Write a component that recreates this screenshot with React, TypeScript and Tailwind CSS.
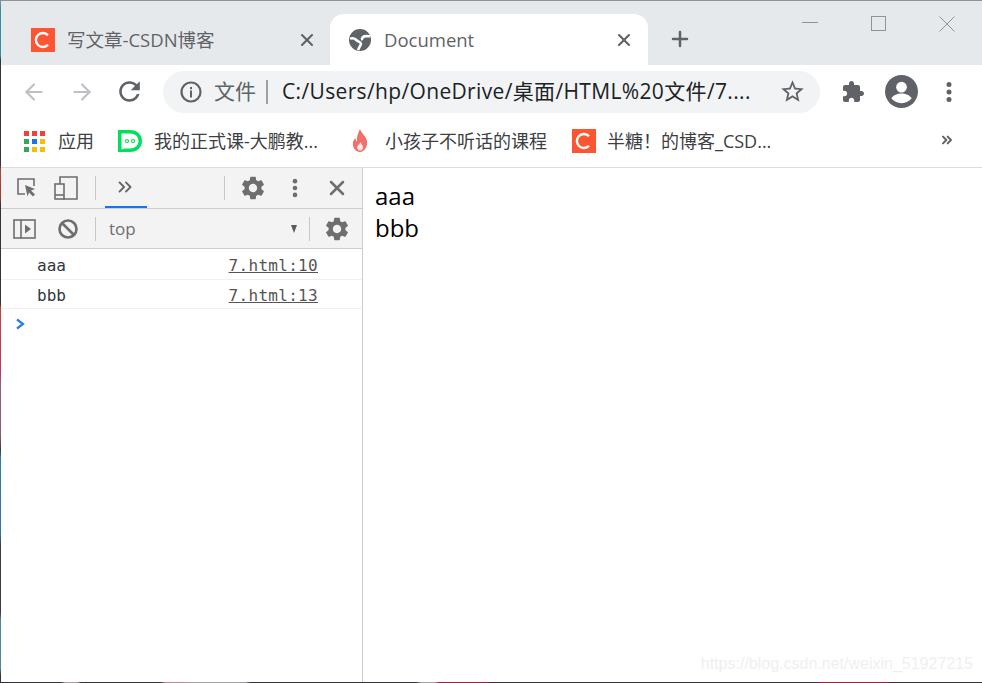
import React from 'react';
import { Plus, X, ArrowLeft, ArrowRight, ChevronsRight } from 'lucide-react';

const uiFont = "font-['Open_Sans','Noto_Sans_CJK_SC',sans-serif]";

const GEAR_PATH = 'M19.14 12.94c.04-.3.06-.61.06-.94 0-.32-.02-.64-.07-.94l2.03-1.58c.18-.14.23-.41.12-.61l-1.92-3.32c-.12-.22-.37-.29-.59-.22l-2.39.96c-.5-.38-1.03-.7-1.62-.94l-.36-2.54c-.04-.24-.24-.41-.48-.41h-3.84c-.24 0-.43.17-.47.41l-.36 2.54c-.59.24-1.13.57-1.62.94l-2.39-.96c-.22-.08-.47 0-.59.22L2.74 8.87c-.12.21-.08.47.12.61l2.03 1.58c-.05.3-.09.63-.09.94s.02.64.07.94l-2.03 1.58c-.18.14-.23.41-.12.61l1.92 3.32c.12.22.37.29.59.22l2.39-.96c.5.38 1.03.7 1.62.94l.36 2.54c.05.24.24.41.48.41h3.84c.24 0 .44-.17.47-.41l.36-2.54c.59-.24 1.13-.56 1.62-.94l2.39.96c.22.08.47 0 .59-.22l1.92-3.32c.12-.22.07-.47-.12-.61l-2.01-1.58zM12 15.6c-1.98 0-3.6-1.62-3.6-3.6s1.62-3.6 3.6-3.6 3.6 1.62 3.6 3.6-1.62 3.6-3.6 3.6z';

const CsdnIcon = () => (
  <div className="w-6 h-6 bg-[#fc5531] flex items-center justify-center shrink-0">
    <svg width="18" height="18" viewBox="0 0 18 18" fill="none">
      <path d="M14 4.2A7 7 0 1 0 14 13.8" stroke="#fff" strokeWidth="2.4" />
    </svg>
  </div>
);

const GlobeIcon = () => (
  <svg width="22" height="22" viewBox="0 0 24 24" fill="none" className="shrink-0">
    <circle cx="12" cy="12" r="12" fill="#5f6368" />
    <path d="M1 10.500c3-1 5-.5 7 1.500s5 2 5 4-2 3-3 7" stroke="#fff" strokeWidth="2.800" />
    <path d="M23 8c-3 0-6-1-8 1-1 1-1 2 0 3" stroke="#fff" strokeWidth="2.800" />
  </svg>
);

const AppsIcon = () => {
  const colors = ['#ef4136', '#ef4136', '#ef4136', '#34a853', '#1a73e8', '#fbbc04', '#34a853', '#fbbc04', '#fbbc04'];
  return (
    <div className="grid grid-cols-3 gap-[3px] w-[21px] shrink-0">
      {colors.map((c, i) => (
        <div key={i} className="w-[5px] h-[5px]" style={{ background: c }} />
      ))}
    </div>
  );
};

const ChatIcon = () => (
  <svg width="24" height="24" viewBox="0 0 24 24" className="shrink-0">
    <path d="M0 1h12c7 0 12 4.500 12 11s-5 11-12 11H0z" fill="#00e05c" />
    <path d="M3.500 4.500h8.500c5 0 8.500 3 8.500 7.500s-3.500 7.500-8.500 7.500H6.500l-3 1z" fill="#fff" />
    <circle cx="9" cy="12" r="1.500" fill="none" stroke="#00e05c" strokeWidth="1.200" />
    <circle cx="15" cy="12" r="1.500" fill="none" stroke="#00e05c" strokeWidth="1.200" />
  </svg>
);

const FlameIcon = () => (
  <svg width="16" height="24" viewBox="0 0 16 24" className="shrink-0">
    <path d="M8 0c1 4 6 7 7 12 1 6-3 11-7 11S0 19 1 13c.5-2 1.500-3 2.500-4 0 2 .5 3 1.500 3.500C4.500 8 6 4 8 0z" fill="#f0706a" />
    <path d="M8.500 13c.5 2 2.500 3 2.500 5.500 0 1.500-1 3-3 3s-3-1.500-3-3c0-2 2.500-3 3.500-5.500z" fill="#fde8e6" />
  </svg>
);

const AvatarIcon = () => (
  <svg width="33" height="33" viewBox="0 0 34 34" className="shrink-0">
    <circle cx="17" cy="17" r="17" fill="#5f6368" />
    <circle cx="17" cy="12.500" r="5.500" fill="#fff" />
    <path d="M6.500 24c2-3.500 6.500-5 10.500-5s8.500 1.500 10.500 5c-2.500 3-6 5-10.500 5s-8-2-10.500-5z" fill="#fff" />
  </svg>
);

const ExtensionIcon = () => (
  <svg width="24" height="24" viewBox="0 0 24 24" fill="#5f6368" className="shrink-0">
    <path d="M20.5 11H19V7c0-1.100-.9-2-2-2h-4V3.500C13 2.120 11.880 1 10.500 1S8 2.120 8 3.500V5H4c-1.100 0-1.990.9-1.990 2v3.800H3.500c1.490 0 2.700 1.210 2.700 2.700s-1.210 2.700-2.700 2.700H2V20c0 1.100.9 2 2 2h3.800v-1.500c0-1.490 1.210-2.700 2.700-2.700 1.490 0 2.700 1.210 2.700 2.700V22H17c1.100 0 2-.9 2-2v-4h1.500c1.380 0 2.500-1.120 2.500-2.500S21.880 11 20.500 11z" />
  </svg>
);

const ReloadIcon = () => (
  <svg width="31" height="31" viewBox="0 0 24 24" fill="#5f6368" className="shrink-0">
    <path d="M17.650 6.350C16.200 4.900 14.210 4 12 4c-4.420 0-7.990 3.580-7.990 8s3.570 8 7.990 8c3.730 0 6.840-2.550 7.730-6h-2.080c-.82 2.330-3.040 4-5.650 4-3.310 0-6-2.690-6-6s2.690-6 6-6c1.660 0 3.140.69 4.220 1.780L13 11h7V4l-2.350 2.350z" />
  </svg>
);

const InfoIcon = () => (
  <svg width="22" height="22" viewBox="0 0 22 22" fill="none" className="shrink-0">
    <circle cx="11" cy="11" r="9.500" stroke="#5f6368" strokeWidth="2.200" />
    <rect x="10" y="9.500" width="2" height="7" fill="#5f6368" />
    <rect x="10" y="6" width="2" height="2.200" fill="#5f6368" />
  </svg>
);

const StarIcon = () => (
  <svg width="27" height="27" viewBox="0 0 24 24" fill="#5f6368" className="shrink-0">
    <path d="M22 9.240l-7.190-.62L12 2 9.190 8.630 2 9.240l5.460 4.730L5.820 21 12 17.270 18.180 21l-1.630-7.030L22 9.240zM12 15.400l-3.760 2.270 1-4.280-3.320-2.880 4.380-.38L12 6.100l1.710 4.040 4.380.38-3.320 2.880 1 4.280L12 15.400z" />
  </svg>
);

const DotsIcon = ({ color, size }: { color: string; size: number }) => (
  <svg width={size} height={size} viewBox="0 0 24 24" fill={color} className="shrink-0">
    <circle cx="12" cy="4.500" r="2.500" />
    <circle cx="12" cy="12" r="2.500" />
    <circle cx="12" cy="19.500" r="2.500" />
  </svg>
);

const InspectIcon = () => (
  <svg width="22" height="22" viewBox="0 0 22 22" fill="none" className="shrink-0">
    <path d="M9 17H2V2h16v7" stroke="#6e6e6e" strokeWidth="1.600" />
    <path d="M9 8l10 4-4 1.500 4 4-2 2-4-4-1.500 4z" fill="#6e6e6e" />
  </svg>
);

const DeviceIcon = () => (
  <svg width="24" height="24" viewBox="0 0 24 24" fill="none" className="shrink-0">
    <path d="M6 8V1h17v22H9" stroke="#6e6e6e" strokeWidth="1.600" />
    <rect x="1" y="8" width="9" height="15" stroke="#6e6e6e" strokeWidth="1.600" />
    <path d="M1 19h9" stroke="#6e6e6e" strokeWidth="1.600" />
  </svg>
);

const SidebarIcon = () => (
  <svg width="24" height="22" viewBox="0 0 24 22" fill="none" className="shrink-0">
    <rect x="1" y="2" width="21" height="18" stroke="#6e6e6e" strokeWidth="1.600" />
    <path d="M8 2v18" stroke="#6e6e6e" strokeWidth="1.600" />
    <path d="M12 6.500l6 4.500-6 4.500z" fill="#6e6e6e" />
  </svg>
);

const BlockIcon = () => (
  <svg width="22" height="22" viewBox="0 0 22 22" fill="none" className="shrink-0">
    <circle cx="11" cy="11" r="8.500" stroke="#6e6e6e" strokeWidth="2.600" />
    <path d="M5 5l12 12" stroke="#6e6e6e" strokeWidth="2.600" />
  </svg>
);

const Gear = () => (
  <svg width="28" height="28" viewBox="0 0 24 24" fill="#6e6e6e" className="shrink-0">
    <path d={GEAR_PATH} />
  </svg>
);

const ToolbarDivider = () => <div className="w-px h-6 bg-[#c8c8c8] shrink-0" />;

const Bookmark = ({ icon, label, className }: { icon: React.ReactNode; label: string; className: string }) => (
  <div className={`flex items-center ${className}`}>
    {icon}
    <span className="text-[18px] text-[#3c4043] whitespace-nowrap leading-none">{label}</span>
  </div>
);

const ConsoleRow = ({ msg, source, className }: { msg: string; source: string; className: string }) => (
  <div className={`flex justify-between pl-[36px] pr-[44px] pt-[4px] items-center border-b border-[#f0f0f0] font-['DejaVu_Sans_Mono',monospace] text-[16px] text-[#303942] ${className}`}>
    <span>{msg}</span>
    <span className="underline text-[#555] tracking-[0.3px]">{source}</span>
  </div>
);

export default function App() {
  return (
    <div className={`w-[982px] h-[683px] flex overflow-hidden bg-white ${uiFont}`}>
      {/* bit of desktop wallpaper showing down the left edge */}
      <div className="w-px shrink-0 bg-[linear-gradient(to_bottom,#8d9396_0,#2f8f9a_9px,#2f8f9a_56px,#33343a_60px,#33343a_165px,#b0453c_170px,#a03a34_198px,#33343a_204px,#33343a_304px,#c4433e_308px,#c0345c_372px,#9a6070_385px,#8e5a68_435px,#3a3a44_450px,#2a7fa8_458px,#2a78a8_533px,#3a3a48_545px,#3a3a48_612px,#4a8a9c_620px,#4a8a9c_668px,#33343a_675px)]" />
      <div className="flex-1 min-w-0 flex flex-col">
        <div className="flex-1 min-h-0 flex flex-col border-t border-[#8d9396]">
          {/* tab strip */}
          <div className="h-[64px] bg-[#e6e9ec] flex shrink-0">
            <div className="w-[329px] pt-[13px] pl-[30px] pr-[13px] flex items-center shrink-0">
              <CsdnIcon />
              <span className="ml-[12px] text-[18.500px] text-[#5f6368] whitespace-nowrap flex-1">写文章-CSDN博客</span>
              <X size={20} className="text-[#5f6368]" strokeWidth={2.500} />
            </div>
            <div className="mt-[13px] w-[318px] h-[51px] bg-white rounded-t-[14px] pl-[19px] pr-[14px] flex items-center shrink-0">
              <GlobeIcon />
              <span className="ml-[13px] text-[18.500px] text-[#5f6368] flex-1">Document</span>
              <X size={20} className="text-[#5f6368]" strokeWidth={2.500} />
            </div>
            <div className="pl-[20px] pt-[26px] shrink-0">
              <Plus size={24} className="text-[#5f6368]" strokeWidth={2.500} />
            </div>
            <div className="flex-1 flex justify-end pr-[27px] pt-[15px] gap-[52px]">
              <svg width="16" height="16" viewBox="0 0 16 16" fill="none" stroke="#8d9396" className="mr-[1px]">
                <path d="M0 6.500h16" />
              </svg>
              <svg width="16" height="16" viewBox="0 0 16 16" fill="none" stroke="#8d9396">
                <rect x="0.500" y="0.500" width="14" height="14" />
              </svg>
              <svg width="16" height="16" viewBox="0 0 16 16" fill="none" stroke="#8d9396">
                <path d="M0.500 0.500l15 15M15.500 0.500l-15 15" />
              </svg>
            </div>
          </div>
          {/* address toolbar */}
          <div className="h-[53px] flex items-center shrink-0 pl-[20px]">
            <ArrowLeft size={26} className="text-[#bdc1c6] shrink-0" strokeWidth={2} />
            <ArrowRight size={26} className="text-[#bdc1c6] ml-[22px] shrink-0" strokeWidth={2} />
            <div className="ml-[19px]"><ReloadIcon /></div>
            <div className="ml-[18px] w-[657px] h-[42px] rounded-full bg-[#f1f3f4] flex items-center pl-[17px] pr-[14px] shrink-0">
              <InfoIcon />
              <span className="ml-[12px] text-[21px] text-[#5f6368] whitespace-nowrap">文件</span>
              <div className="w-0.5 h-6 bg-[#9aa0a6] ml-[10px]" />
              <span className="ml-[14px] text-[21px] tracking-[0.35px] text-[#202124] whitespace-nowrap flex-1">C:/Users/hp/OneDrive/桌面/HTML%20文件/7....</span>
              <StarIcon />
            </div>
            <div className="ml-[21px]"><ExtensionIcon /></div>
            <div className="ml-[20px]"><AvatarIcon /></div>
            <div className="ml-[19px]"><DotsIcon color="#5f6368" size={24} /></div>
          </div>
          {/* bookmarks bar */}
          <div className="h-[50px] flex items-center shrink-0 border-b border-[#dadce0] pl-[23px] pr-[27px] pb-[3px]">
            <Bookmark icon={<AppsIcon />} label="应用" className="gap-[13px] w-[94px]" />
            <Bookmark icon={<ChatIcon />} label="我的正式课-大鹏教..." className="gap-[12px] w-[234px]" />
            <Bookmark icon={<FlameIcon />} label="小孩子不听话的课程" className="gap-[17px] w-[220px]" />
            <Bookmark icon={<CsdnIcon />} label="半糖！的博客_CSD..." className="gap-[11px] flex-1" />
            <ChevronsRight size={16} className="text-[#5f6368] mb-[2px]" strokeWidth={3} />
          </div>
          {/* content */}
          <div className="flex-1 flex min-h-0">
            <div className="w-[362px] border-r border-[#cbcdd1] flex flex-col shrink-0">
              <div className="h-[41px] bg-[#f3f3f3] border-b border-[#cdcdcd] flex items-center pl-[15px] pr-[12px] shrink-0">
                <InspectIcon />
                <div className="ml-[16px]"><DeviceIcon /></div>
                <div className="ml-[17px]"><ToolbarDivider /></div>
                <div className="ml-[9px] w-[42px] h-[40px] shrink-0 border-b-2 border-[#1a73e8] flex items-center justify-center pr-[2px]">
                  <ChevronsRight size={22} className="text-[#5f6368]" strokeWidth={2} />
                </div>
                <div className="ml-[77px]"><ToolbarDivider /></div>
                <div className="ml-[14px]"><Gear /></div>
                <div className="ml-[17px]"><DotsIcon color="#6e6e6e" size={22} /></div>
                <X size={24} className="ml-[19px] text-[#6e6e6e] shrink-0" strokeWidth={2.500} />
              </div>
              <div className="h-[40px] bg-[#f3f3f3] border-b border-[#cdcdcd] flex items-center pl-[12px] pr-[11px] shrink-0">
                <SidebarIcon />
                <div className="ml-[20px]"><BlockIcon /></div>
                <div className="ml-[16px]"><ToolbarDivider /></div>
                <span className="ml-[13px] text-[17px] text-[#6e6e6e] flex-1">top</span>
                <div className="w-0 h-0 border-l-[3px] border-r-[3px] border-t-[8px] border-l-transparent border-r-transparent border-t-[#5a5a5a]" />
                <div className="ml-[12px]"><ToolbarDivider /></div>
                <div className="ml-[13px]"><Gear /></div>
              </div>
              <ConsoleRow msg="aaa" source="7.html:10" className="h-[31px]" />
              <ConsoleRow msg="bbb" source="7.html:13" className="h-[29px]" />
              <div className="pl-[14px] pt-[9px]">
                <svg width="12" height="12" viewBox="0 0 12 12" fill="none">
                  <path d="M2 1.500L8 6l-6 4.500" stroke="#2a7de1" strokeWidth="2.200" />
                </svg>
              </div>
            </div>
            <div className="flex-1 flex flex-col min-w-0">
              <div className="pl-[12px] pt-[12px] text-[24px] leading-[32px] text-black">
                <div>aaa</div>
                <div>bbb</div>
              </div>
              <div className="mt-auto pr-[9px] pb-[9px] text-right font-['Liberation_Sans',sans-serif] text-[16px] leading-[18px] text-[#efefef]">
                https://blog.csdn.net/weixin_51927215
              </div>
            </div>
          </div>
        </div>
        {/* wallpaper along the bottom edge */}
        <div className="h-px shrink-0 bg-[linear-gradient(to_right,#33343a_0,#33343a_60px,#a8a0a4_64px,#a8a0a4_76px,#33343a_80px,#33343a_160px,#b88a9a_164px,#b88a9a_180px,#a0a0a0_190px,#a0a0a0_244px,#33343a_250px,#33343a_415px,#a0a0a0_420px,#a0a0a0_434px,#8a2f3f_438px,#8a2f3f_485px,#33343a_490px,#33343a_815px,#8a2f3f_820px,#8a2f3f_885px,#33343a_890px)]" />
      </div>
    </div>
  );
}
